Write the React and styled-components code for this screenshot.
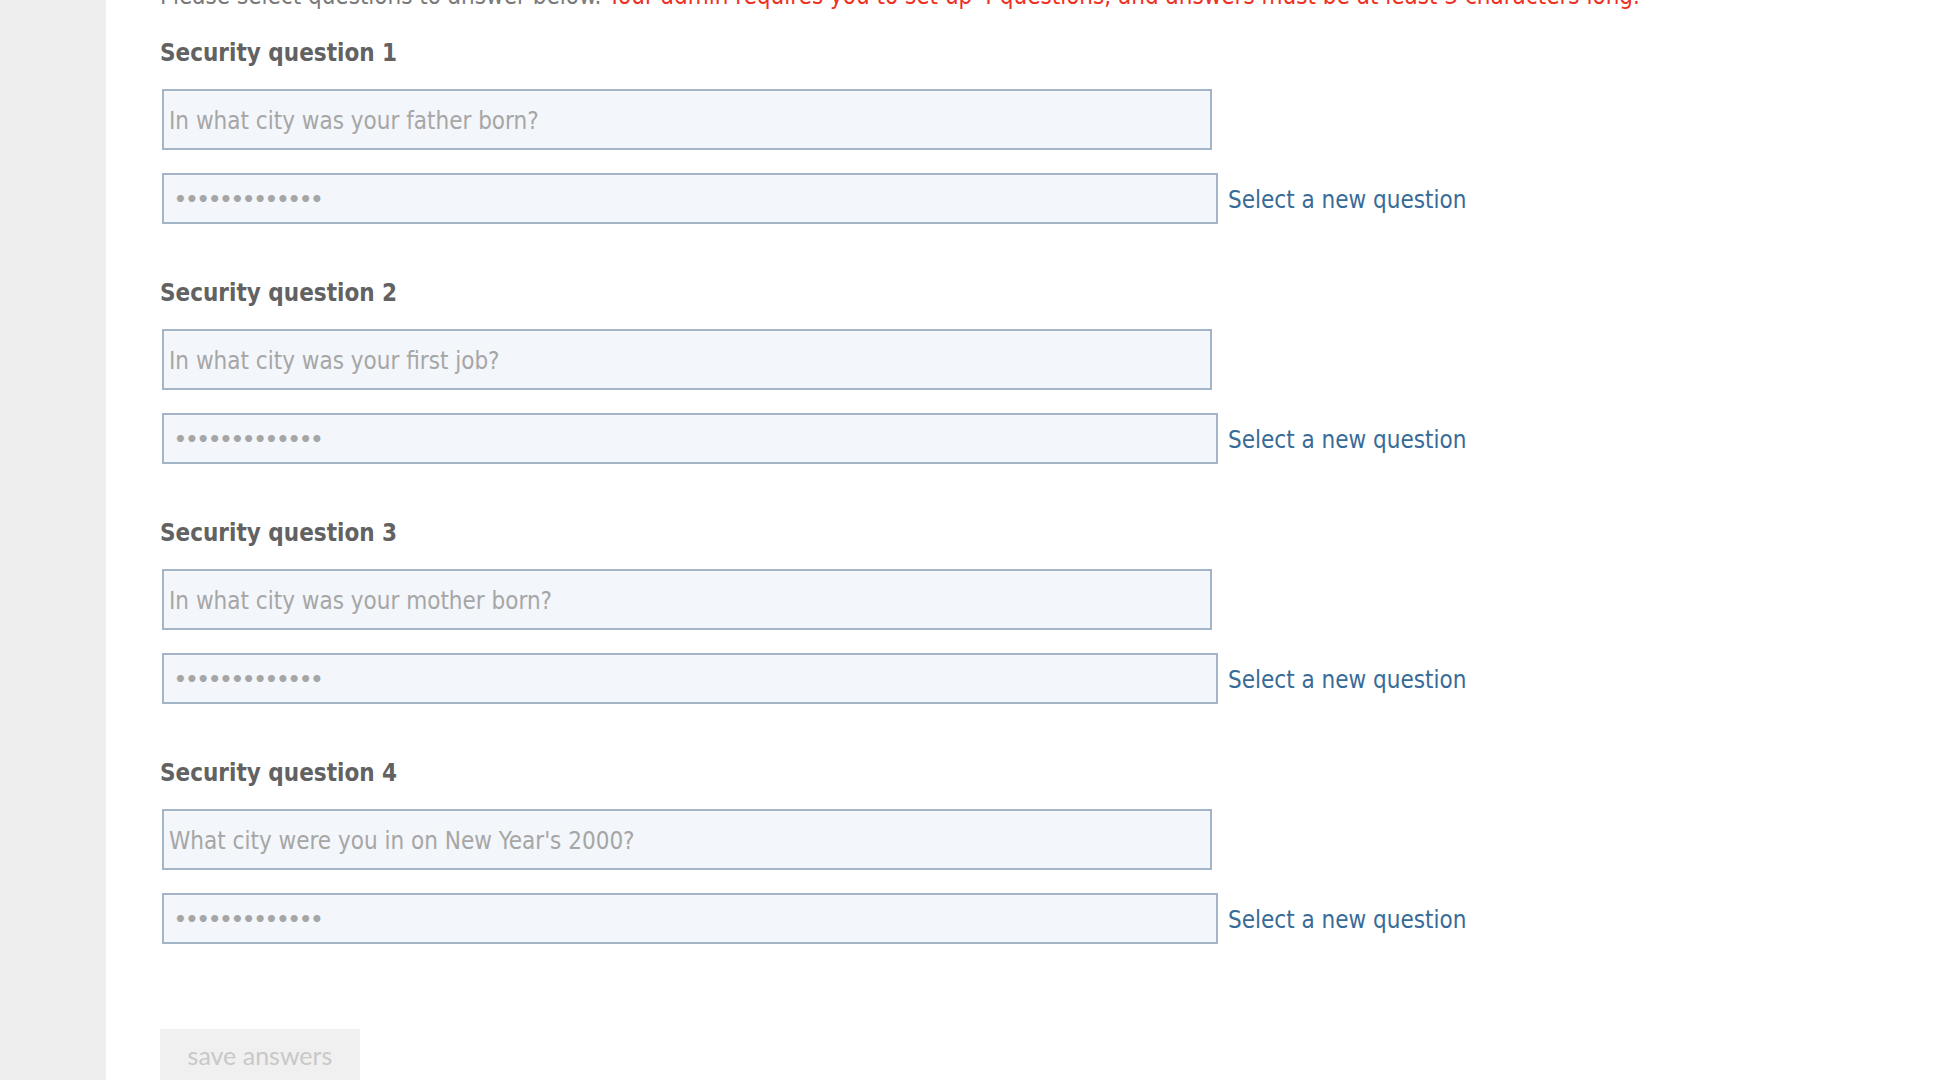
import React from "react";
import styled, { createGlobalStyle } from "styled-components";

const GlobalStyle = createGlobalStyle`
  html, body {
    margin: 0;
    padding: 0;
    background: #ffffff;
    overflow: hidden;
  }
  body {
    font-family: "DejaVu Sans Condensed", "DejaVu Sans", sans-serif;
  }
`;

const Page = styled.div`
  display: flex;
  height: 1080px;
  overflow: hidden;
`;

const Sidebar = styled.div`
  width: 106px;
  flex-shrink: 0;
  background: #eeeeee;
`;

const Main = styled.div`
  flex: 1;
  padding: 0 0 0 54px;
  display: flex;
  flex-direction: column;
`;

const Intro = styled.p`
  margin: -18px 0 0 0;
  font-size: 24px;
  line-height: 28px;
  color: #7a7a7a;
  white-space: nowrap;

  span {
    color: #ee3124;
  }
`;

const Section = styled.section`
  display: flex;
  flex-direction: column;
  margin-top: ${(p) => (p.first ? "29px" : "55px")};
`;

const Heading = styled.h3`
  margin: 0 0 22px 0;
  font-size: 24px;
  line-height: 28px;
  font-weight: bold;
  color: #626262;
`;

const QuestionInput = styled.input`
  box-sizing: border-box;
  width: 1050px;
  height: 61px;
  margin: 0 0 23px 2px;
  padding: 2px 5px 0;
  border: 2px solid #a3b5c6;
  background: #f3f6fa;
  font-family: inherit;
  font-size: 24px;
  color: #a6a6a6;
  outline: none;

  &::placeholder {
    color: #a6a6a6;
  }
`;

const AnswerRow = styled.div`
  display: flex;
  align-items: center;
  gap: 10px;
  margin-left: 2px;
`;

const AnswerInput = styled.input`
  box-sizing: border-box;
  width: 1056px;
  height: 51px;
  padding: 0 10px;
  border: 2px solid #a3b5c6;
  background: #f3f6fa;
  font-family: "DejaVu Sans", sans-serif;
  font-size: 20px;
  font-weight: bold;
  letter-spacing: -1.4px;
  color: #a6a6a6;
  outline: none;
`;

const NewQuestionLink = styled.a`
  font-size: 24px;
  color: #386b98;
  text-decoration: none;
  cursor: pointer;
  padding-top: 2px;
`;

const SaveButton = styled.button`
  align-self: flex-start;
  margin-top: 85px;
  width: 200px;
  height: 62px;
  border: none;
  background: #f0f0f0;
  color: #c8c8c8;
  font-family: Lato, "Open Sans", sans-serif;
  font-size: 25px;
  cursor: default;
`;

const questions = [
  "In what city was your father born?",
  "In what city was your first job?",
  "In what city was your mother born?",
  "What city were you in on New Year's 2000?",
];

export default function App() {
  return (
    <>
      <GlobalStyle />
      <Page>
        <Sidebar />
        <Main>
          <Intro>
            Please select questions to answer below.{" "}
            <span>
              Your admin requires you to set up 4 questions, and answers must
              be at least 3 characters long.
            </span>
          </Intro>
          {questions.map((q, i) => (
            <Section key={q} first={i === 0}>
              <Heading>Security question {i + 1}</Heading>
              <QuestionInput type="text" placeholder={q} readOnly />
              <AnswerRow>
                <AnswerInput type="password" defaultValue="aaaaaaaaaaaaa" />
                <NewQuestionLink>Select a new question</NewQuestionLink>
              </AnswerRow>
            </Section>
          ))}
          <SaveButton disabled>save answers</SaveButton>
        </Main>
      </Page>
    </>
  );
}
